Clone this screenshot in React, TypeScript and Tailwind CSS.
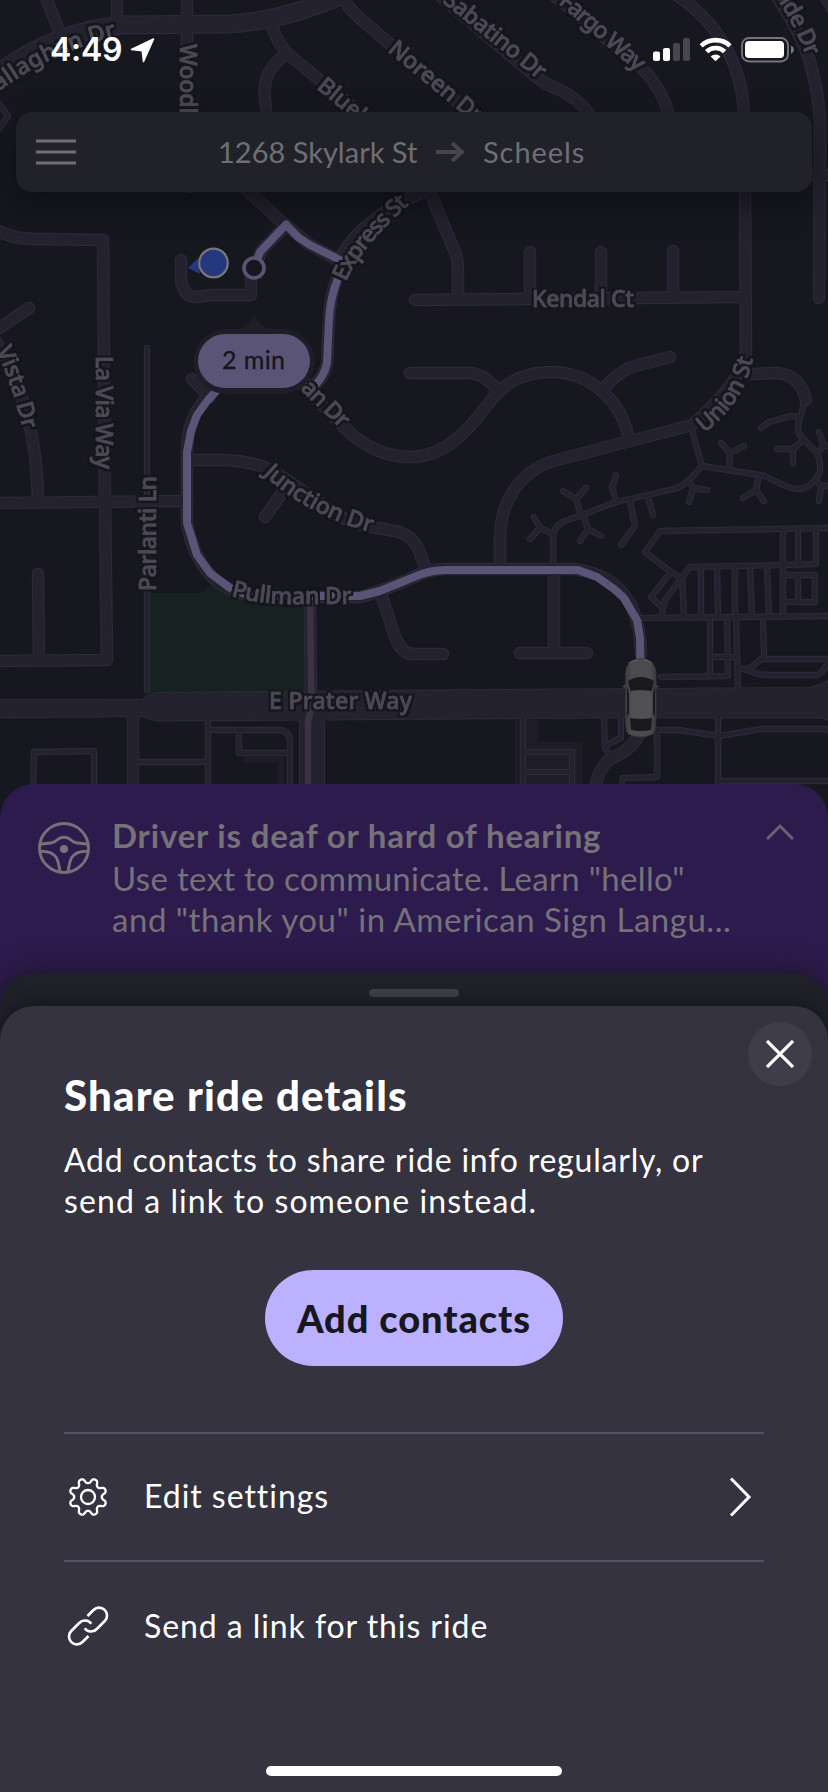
import React from "react";

const WIDE = [
  "M45,-5 L61,36", "M117,-5 V22", "M187,-5 L187,120 L189,187",
  "M343,-2 Q349,9 362,20 L485,126", "M272,26 Q276,40 287,53 L380,130", "M287,54 C265,68 262,85 266,108",
  "M236,180 L286,226", "M442,-2 L535,76 Q545,84 560,90 Q578,98 590,115 L600,130", "M555,-4 L640,67 Q660,84 669,115",
  "M675,-6 C715,20 742,60 744,115 L745,190 L746,350 Q744,380 692,425 L557,460 C520,470 500,500 500,540 V566",
  "M770,-14 Q800,30 810,62 Q819,95 820,120 L819,298", "M800,175 H835", "M824,-6 L832,8",
  "M338,265 C345,240 380,208 432,188", "M427,185 L454,250 Q458,258 458,270 V298",
  "M415,300 L745,297", "M530,252 V298", "M601,252 V298", "M673,251 V298",
  "M410,373 H470 Q485,374 497,390", "M290,372 L345,428 Q375,458 414,457 C455,455 478,415 495,396 Q515,372 551,372 C590,372 622,400 629,440",
  "M603,389 Q620,370 635,366 L670,357", "M750,374 L777,373 Q800,375 806,400",
  "M-5,229 C10,238 25,239 35,239 L103,240 L105,500 L107,660 L-5,661", "M-5,331 L29,308", "M-8,335 C22,380 38,440 38,502",
  "M-5,503 L187,501", "M38,574 L39,660", "M192,379 L210,397", "M187,460 H222 Q255,461 275,472 L330,510 Q350,525 378,528 L400,532 Q412,536 419,550 L427,572",
  "M284,490 L265,517", "M382,597 L395,637 Q402,656 418,654 L443,654", "M554,572 V653", "M520,653 L587,653",
  "M181,260 V280 Q184,298 197,297 L212,295 H251 V275", "M133,712 V790", "M310,600 L311,705", "M640,733 Q632,750 612,758 Q598,766 595,790",
  "M254,268 L262,250 L286,225 L310,245 L340,261", "M338,275 Q330,295 329,320 L327,363 Q324,377 315,385",
  "M210,395 Q187,415 187,452 L187,523 Q192,555 212,577 Q230,594 260,597 L360,597 Q380,592 414,577 Q430,569 445,569 L572,569 Q640,575 641,655",
];

const THIN = [
  "M147,348 V690", "M-3,101 L8,116 L-3,132", "M33,790 L34,752 L94,751 L94,790", "M208,720 V790", "M137,762 H208",
  "M208,730 H280 Q290,732 290,741 V790", "M239,730 V753 H290",
  "M692,430 L702,466", "M804,398 L802,412 Q796,425 799,434 L817,453 Q822,465 819,474 Q810,490 797,489 Q787,488 765,476 L702,466 L689,480 Q680,488 674,489 L616,502 L582,515 L565,521 Q553,526 553,538 V566",
  "M534,517 L540,528 L553,534 M540,528 L530,539", "M563,491 L576,499 L581,515 M576,499 L586,488", "M616,475 L612,487 L616,502",
  "M583,515 L588,529 L601,536 M588,529 L580,541", "M630,500 L635,526 L621,545", "M648,497 L653,515",
  "M689,480 L693,488 L707,490 M693,488 L689,502", "M729,468 L730,453 L721,443 M730,453 L744,446", "M759,475 L756,490 L743,498 M756,490 L764,501",
  "M798,417 L791,416 L769,422 L761,428", "M802,441 L793,449 L777,449 M793,449 V463", "M817,453 L824,446 L819,432 M824,446 H832",
  "M816,480 L821,486 H832 M821,486 L819,501",
  "M832,528 L660,531 L645,552 L671,572 L680,577", "M671,572 L651,597 L662,607", "M661,617 L665,600 L690,567 L782,565 L816,564 V529",
  "M783,530 V616", "M798,530 V565", "M682,577 L684,616", "M701,567 V616", "M717,567 L718,616", "M735,567 V616", "M750,567 L752,616", "M767,567 L769,616",
  "M783,575 H815 V602 H783", "M798,575 V602", "M642,618 L832,616", "M710,618 V675", "M727,618 L728,676 L661,677", "M710,657 H736", "M736,618 L738,690",
  "M763,618 L764,657", "M832,659 H761 L748,670 L738,668", "M748,670 Q756,675 770,675 H817 Q822,674 830,660",
  "M523,718 V790", "M526,752 H572 V790", "M526,772 H572", "M604,718 L605,748 L611,757", "M621,718 V738 L606,745",
  "M656,730 H679 L719,736 L761,729 H826 L832,733", "M657,730 V777 L623,778 L621,790", "M718,718 V790", "M719,781 H832",
];

const CALLAGHAN = "M-8,78 Q50,32 123,25 L227,24 Q280,22 345,-6";
const ROUTE =
  "M254,268 L260,252 L286,224.500 L298,237 L310,245 L342,261 M338,278 Q330,298 329,320 L327,363 Q324,377 315,385 L290,378 L228,378 L208,400 L197,415 L191,431 L187,452 V523 L197,555 L210,573 L230,588 L250,596 L300,596 H360 L380,591 L414,577 Q430,570 445,570 H578 L597,577 L614,589 L624,598 L631,610 L637,620 L640,638 L640.500,664";

type Label = { id: string; d: string; text: string; len?: number };
const LABELS: Label[] = [
  { id: "callaghan", d: "M-13,101 Q45,52 122,35.500", text: "Callaghan Dr", len: 146 },
  { id: "wood", d: "M180,44 V190", text: "Woodh" },
  { id: "noreen", d: "M387,51 L490,136", text: "Noreen Dr", len: 114 },
  { id: "blue", d: "M316,88 L400,158", text: "Blueb" },
  { id: "sabatino", d: "M442,2 L560,97", text: "Sabatino Dr", len: 124 },
  { id: "fargo", d: "M558,3 L660,92", text: "Fargo Way", len: 105 },
  { id: "side", d: "M773,-7 Q795,24 810,66", text: "side Dr", len: 72 },
  { id: "kendal", d: "M532,307 H640", text: "Kendal Ct", len: 102 },
  { id: "express", d: "M346,282 Q361,246 412,202", text: "Express St", len: 101 },
  { id: "vista", d: "M-4,350 Q14,388 24,436", text: "Vista Dr", len: 84 },
  { id: "lavia", d: "M96,356 V480", text: "La Via Way", len: 113 },
  { id: "parlanti", d: "M156,591 V470", text: "Parlanti Ln", len: 115 },
  { id: "junction", d: "M263,474 Q306,515 376,534", text: "Junction Dr", len: 124 },
  { id: "pullman", d: "M231,596 Q262,605 300,604 L360,604", text: "Pullman Dr", len: 121 },
  { id: "prater", d: "M269,709 H420", text: "E Prater Way", len: 143 },
  { id: "union", d: "M704,433 Q746,402 754,353", text: "Union St", len: 91 },
  { id: "an", d: "M300,389 L350,438", text: "an Dr", len: 57 },
];

function CityMap() {
  return (
    <svg className="absolute inset-0" width="828" height="1040" viewBox="0 0 828 1040" fill="none" strokeLinecap="round" strokeLinejoin="round">
      <defs>
        <filter id="halo" filterUnits="userSpaceOnUse" x="-20" y="-20" width="870" height="820">
          <feMorphology in="SourceAlpha" operator="dilate" radius="1.5" result="grown" />
          <feGaussianBlur in="grown" stdDeviation="0.6" result="soft" />
          <feFlood floodColor="#17171f" />
          <feComposite in2="soft" operator="in" result="edge" />
          <feMerge>
            <feMergeNode in="edge" />
            <feMergeNode in="edge" />
            <feMergeNode in="SourceGraphic" />
          </feMerge>
        </filter>
        <linearGradient id="body" x1="0" x2="1" y1="0" y2="0">
          <stop offset="0" stopColor="#3c3c3f" /><stop offset="0.200" stopColor="#4c4c50" /><stop offset="0.800" stopColor="#4c4c50" /><stop offset="1" stopColor="#3c3c3f" />
        </linearGradient>
      </defs>
      <rect width="828" height="1040" fill="#17171f" />
      <path d="M149,593 H202 Q210,584 215,583 L235,598 H309 L306,694 H149Z" fill="#162120" />
      <path d="M243,757 H284 V790 H277 V763 H243Z M515,720 H538 V742 H583 V790 H515Z" fill="#1d1c27" />
      <g stroke="#2c2a38">
        {THIN.map((d) => <path key={d} d={d} strokeWidth="6.4" />)}
        {WIDE.map((d) => <path key={d} d={d} strokeWidth="12.6" />)}
        <path d={CALLAGHAN} strokeWidth="19" />
        <path d="M312,715 V800" strokeWidth="26" />
      </g>
      <path d="M-5,699.5 L143,699 Q150,692.5 158,692.5 L560,689 L808,687.500 Q820,686 832,678 V721 L822,718 H600 L316,720 L158,721 Q150,720 143,716.500 L-5,718Z" fill="#24222e" stroke="#2c2a38" strokeWidth="1.2" />
      <g stroke="#24222e">
        {THIN.map((d) => <path key={d} d={d} strokeWidth="4" />)}
        {WIDE.map((d) => <path key={d} d={d} strokeWidth="10.200" />)}
        <path d={CALLAGHAN} strokeWidth="16.500" />
        <path d="M312,712 V800" strokeWidth="23.500" />
      </g>
      <path d="M310,600 L311.5,705 L308,722 V790" stroke="#3c3246" strokeWidth="6.500" />
      <path d={ROUTE} stroke="#5a5476" strokeWidth="8" />

      <g filter="url(#halo)" fontFamily="'Noto Sans', 'Open Sans', sans-serif" fontSize="23" fontWeight="500" fill="#4b4a56" stroke="#4b4a56" strokeWidth="0.600">
        {LABELS.map((l) => (
          <React.Fragment key={l.id}>
            <path id={l.id} d={l.d} stroke="none" fill="none" />
            <text textLength={l.len}>
              <textPath href={"#" + l.id} textLength={l.len}>{l.text}</textPath>
            </text>
          </React.Fragment>
        ))}
      </g>

      <path d="M188,268 L198,258 L200,274Z" fill="#24387e" />
      <circle cx="213.500" cy="263" r="14.300" fill="#24387e" stroke="#77777c" strokeWidth="2.200" />
      <circle cx="254" cy="268" r="10" fill="#17171f" stroke="#5a5476" strokeWidth="3.600" />
      <path d="M226,329 H236 Q247,328 254,315 Q261,328 272,329 H282 A32.5,32.5 0 0 1 282,394 H226 A32.5,32.5 0 0 1 226,329Z" fill="#1f1e28" />
      <rect x="198" y="334" width="112" height="54" rx="27" fill="#5a5476" />
      <text x="222" y="369" textLength="63" fontFamily="Lato, sans-serif" fontSize="25" fontWeight="400" fill="#15151d" stroke="#15151d" strokeWidth="0.300">2 min</text>

      <path d="M622,687 L627,683 V688Z M659,687 L654,683 V688Z" fill="#4c4c50" />
      <path d="M627,732 h4 v3Z M654,732 h-4 v3Z" fill="#5d1d22" />
      <path d="M625.500,672 Q627,659 641,658.500 Q654,659 656,672 V718 Q656,730 653,734 Q646,737 641,737 Q635,737 628,734 Q625.500,730 625.500,718Z" fill="url(#body)" stroke="#37373b" strokeWidth="0.800" />
      <path d="M629,663 Q634,659.500 638,660 M652,663 Q648,659.500 644,660" stroke="#626266" strokeWidth="1" />
      <path d="M628,681 Q641,673 654,681 L651.500,691 Q641,689 630.500,691Z" fill="#1a191e" />
      <path d="M627,686 L629,694 V713 L627,717Z M655,686 L653,694 V713 L655,717Z" fill="#1a191e" />
      <path d="M630,718 Q641,720 652,718 L651,730 Q641,732 631,730Z" fill="#1a191e" />
      <rect x="630.500" y="691" width="21" height="27" rx="3" fill="#515155" />
    </svg>
  );
}

function StatusBar() {
  return (
    <div className="flex h-28 items-start justify-between pl-[50px] pr-[33px] pt-[29px] text-white">
      <div className="flex items-center gap-[9px]">
        <span className="w-[71px] font-[Inter,sans-serif] text-[32px] font-semibold leading-[42px] tracking-[-0.3px]">4:49</span>
        <svg width="25" height="26" viewBox="0 0 25 26" fill="white" stroke="white" strokeWidth="1.600" strokeLinejoin="round">
          <path d="M1.500,12.500 L23.500,2 L13.500,24.500 L12.300,13.800Z" />
        </svg>
      </div>
      <svg className="mt-1" width="142" height="32" viewBox="0 0 142 32">
        <g fill="white">
          <rect x="0" y="18.500" width="7" height="9.500" rx="2" />
          <rect x="10" y="15" width="7" height="13" rx="2" />
          <rect x="20" y="10" width="7" height="18" rx="2" fill="#47464d" />
          <rect x="30" y="5" width="7" height="23" rx="2" fill="#47464d" />
          <rect x="92" y="8" width="39" height="17" rx="4" />
        </g>
        <g fill="none" stroke="white" strokeWidth="4.600">
          <path d="M48.200,12.800 A21,21 0 0 1 77,12.800" />
          <path d="M53.600,18.600 A13,13 0 0 1 71.600,18.600" />
        </g>
        <path d="M57.700,23.400 A7,7 0 0 1 67.500,23.400 L62.600,28.300Z" fill="white" />
        <rect x="89" y="5" width="46" height="23.500" rx="7" fill="none" stroke="#76757b" strokeWidth="1.800" />
        <path d="M138,12.500 Q141,14 141,16.800 Q141,19.600 138,21Z" fill="#76757b" />
      </svg>
    </div>
  );
}

function SteeringWheel() {
  return (
    <svg width="52" height="52" viewBox="-26 -26 52 52" fill="none" stroke="#757278" strokeWidth="2.900">
      <circle r="24.500" />
      <circle cy="1" r="4.100" fill="#757278" stroke="none" />
      <path d="M-24,-3.800 L-12,-5.300 Q-9,-6 -7,-8 Q-4,-10.700 0,-10.700 Q4,-10.700 7,-8 Q9,-6 12,-5.300 L24,-3.800" />
      <path d="M-24,3.200 Q-12,3 -8,9 Q-5.500,13 -4,24 M24,3.200 Q12,3 8,9 Q5.500,13 4,24" />
    </svg>
  );
}

const GEAR = Array.from({ length: 160 }, (_, i) => {
  const a = (i / 160) * Math.PI * 2;
  const phase = a - Math.PI / 8;
  const r = 16.3 + 2.5 * Math.cos(8 * phase);
  const t = a + 0.03 * Math.sin(16 * phase);
  return `${(r * Math.cos(t)).toFixed(2)},${(r * Math.sin(t)).toFixed(2)}`;
}).join(" ");

function GearIcon() {
  return (
    <svg width="48" height="48" viewBox="-24 -24 48 48" fill="none" stroke="white" strokeWidth="2.300" strokeLinejoin="round">
      <polygon points={GEAR} />
      <circle r="7" />
    </svg>
  );
}

function LinkIcon() {
  const half = "M-0.500,-10 L5.500,-16 A7.800,7.800 0 0 1 16.800,-5 L8.800,3 A7.800,7.800 0 0 1 -3.300,2.300";
  return (
    <svg width="48" height="48" viewBox="-24 -24 48 48" fill="none" stroke="white" strokeWidth="2.600">
      <path d={half} />
      <path d={half} transform="rotate(180)" />
    </svg>
  );
}

export default function App() {
  return (
    <div className="relative flex h-[1792px] w-[828px] flex-col overflow-hidden bg-[#17171f] font-[Lato,sans-serif]">
      <CityMap />
      <div className="relative flex flex-1 flex-col">
        <StatusBar />

        <header className="mx-4 flex h-20 items-center rounded-2xl bg-[#212129] pl-5 text-[29px] text-[#6f6f73] shadow-[0_12px_30px_rgba(8,8,12,0.55)]">
          <svg width="40" height="26" viewBox="0 0 40 26" stroke="#6f6f73" strokeWidth="2.800">
            <path d="M0,2 H40 M0,13 H40 M0,24 H40" />
          </svg>
          <span className="ml-[142px] w-[218px] whitespace-nowrap">1268 Skylark St</span>
          <svg width="30" height="22" viewBox="0 0 30 22" fill="none" stroke="#46454e" strokeWidth="4">
            <path d="M0,11 H26 M16,2 L26,11 L16,20" />
          </svg>
          <span className="ml-[17px] tracking-[0.95px]">Scheels</span>
        </header>

        <section className="mt-[592px] flex flex-1 flex-col rounded-t-[34px] bg-[#2e1b4e]">
          <div className="flex h-[189px] pl-[38px] pr-[34px] text-[#757278]">
            <div className="mt-[38px]"><SteeringWheel /></div>
            <div className="ml-[22px] mt-[31px] flex-1 whitespace-nowrap text-[33px] leading-[41px]">
              <p className="mb-0.5 font-bold tracking-[0.81px]">Driver is deaf or hard of hearing</p>
              <p className="tracking-[0.31px]">Use text to communicate. Learn "hello"</p>
              <p className="tracking-[0.53px]">and "thank you" in American Sign Langu...</p>
            </div>
            <svg className="mt-[39px]" width="28" height="18" viewBox="0 0 28 18" fill="none" stroke="#6a6175" strokeWidth="3">
              <path d="M1,16 L14,3 L27,16" />
            </svg>
          </div>

          <div className="flex flex-1 flex-col rounded-t-[34px] bg-[#21212a] shadow-[0_-4px_24px_rgba(20,20,24,0.6)]">
            <div className="flex h-[33px] justify-center pt-4">
              <div className="h-2 w-[90px] rounded-full bg-[#424249]" />
            </div>

            <main className="flex flex-1 flex-col rounded-t-[34px] bg-[#34333f] px-16 text-white shadow-[0_-2px_24px_rgba(12,12,18,0.6)]">
              <button className="-mr-12 mt-4 flex h-16 w-16 items-center justify-center self-end rounded-full bg-[#3e3d49]">
                <svg width="28" height="28" viewBox="0 0 28 28" stroke="white" strokeWidth="3.200">
                  <path d="M1,1 L27,27 M27,1 L1,27" />
                </svg>
              </button>
              <h1 className="-mt-4 text-[42px] font-black leading-[50px] tracking-[1.15px]">Share ride details</h1>
              <div className="mt-[19px] whitespace-nowrap text-[32px] leading-[41px]">
                <p className="tracking-[0.79px]">Add contacts to share ride info regularly, or</p>
                <p className="tracking-[1.09px]">send a link to someone instead.</p>
              </div>
              <button className="mt-[49px] flex h-24 w-[298px] items-center justify-center self-center whitespace-nowrap rounded-full bg-[#bbb1ff] text-[38px] font-black tracking-[0.9px] text-[#17171f]">
                Add contacts
              </button>
              <div className="mt-[66px] flex h-[130px] items-center border-y-2 border-[#555361] text-[32px]">
                <GearIcon />
                <span className="ml-8 flex-1 pb-0.5 tracking-[0.96px]">Edit settings</span>
                <svg className="mr-3" width="24" height="40" viewBox="0 0 24 40" fill="none" stroke="white" strokeWidth="3">
                  <path d="M3,1.500 L21,20 L3,38.500" />
                </svg>
              </div>
              <div className="flex h-32 items-center text-[32px]">
                <LinkIcon />
                <span className="ml-8 tracking-[0.93px]">Send a link for this ride</span>
              </div>
              <div className="mb-4 mt-auto h-2.5 w-[296px] self-center rounded-full bg-white" />
            </main>
          </div>
        </section>
      </div>
    </div>
  );
}
